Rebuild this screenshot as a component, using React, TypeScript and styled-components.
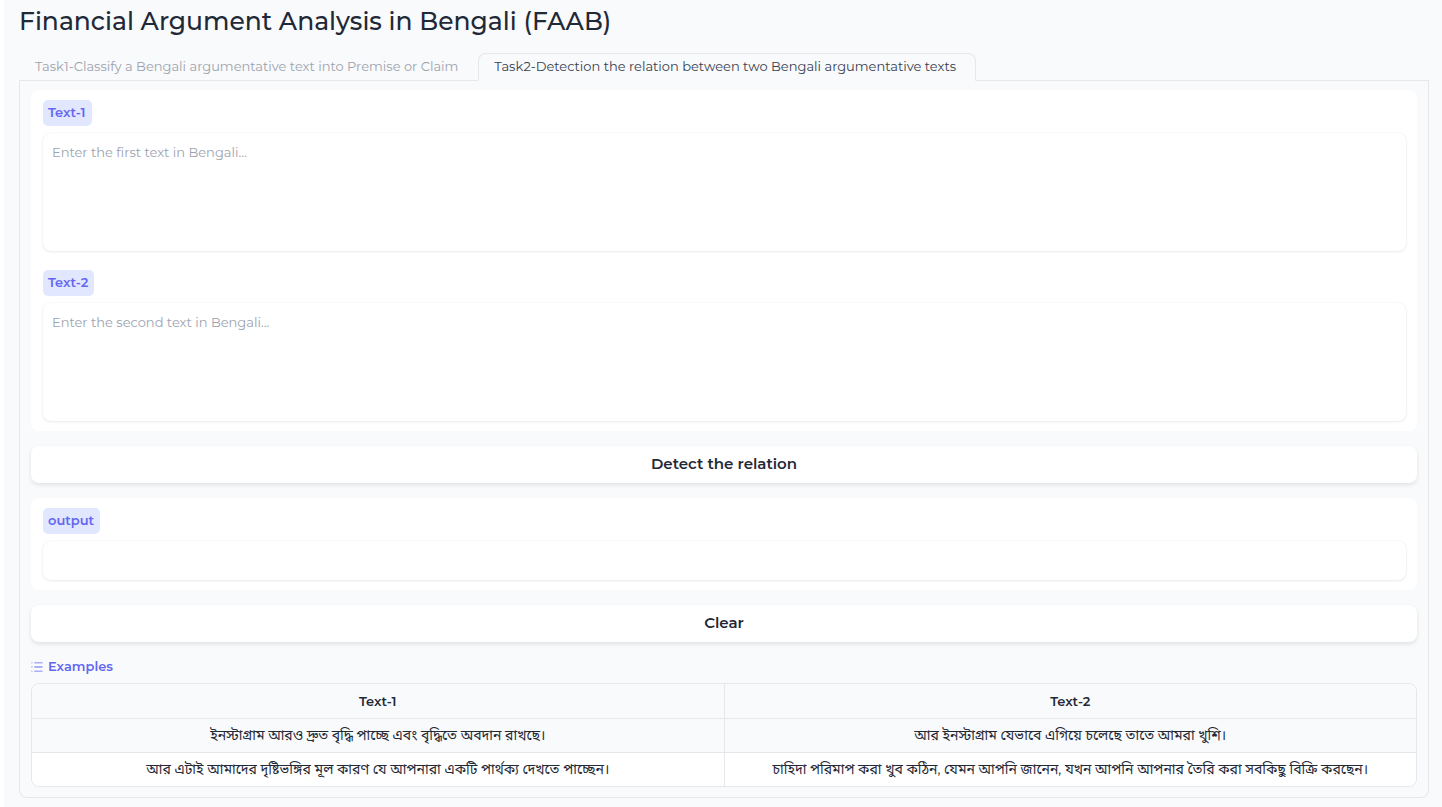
import React, { useState } from "react";
import styled, { createGlobalStyle } from "styled-components";

const GlobalStyle = createGlobalStyle`
  *, *::before, *::after { box-sizing: border-box; }
  body {
    margin: 0;
    background: #ffffff;
    color: #1f2937;
    font-family: Montserrat, Inter, "Noto Sans Bengali", "Noto Sans", sans-serif;
    font-size: 13px;
    line-height: 20px;
  }
  button, textarea, input { font: inherit; color: inherit; }
`;

const Page = styled.main`
  margin-left: 4px;
  padding: 4px 13px 9px 15px;
  background: #f9fafb;
`;

const Title = styled.h1`
  margin: 0 0 15px;
  font-size: 25px;
  line-height: 34px;
  font-weight: 500;
`;

const TabList = styled.div`
  display: flex;
  margin-bottom: -1px;
`;

const Tab = styled.button<{ $active?: boolean }>`
  height: 28px;
  padding: 0 19px 2px 15px;
  border: 1px solid ${(p) => (p.$active ? "#e5e7eb" : "transparent")};
  border-bottom-color: ${(p) => (p.$active ? "#f9fafb" : "#e5e7eb")};
  border-radius: ${(p) => (p.$active ? "8px 8px 0 0" : "0")};
  background: #f9fafb;
  color: ${(p) => (p.$active ? "#374151" : "#9ca3af")};
  white-space: nowrap;
  cursor: pointer;
`;

const Panel = styled.section`
  display: flex;
  flex-direction: column;
  gap: 15px;
  padding: 9px 11px 10px;
  border: 1px solid #e5e7eb;
  border-radius: 0 0 8px 8px;
`;

const Card = styled.div`
  display: flex;
  flex-direction: column;
  gap: 19px;
  padding: 10px 11px 10px 12px;
  border-radius: 8px;
  background: #ffffff;
`;

const Field = styled.div`
  display: flex;
  flex-direction: column;
  align-items: flex-start;
  gap: 7px;
`;

const FieldLabel = styled.label`
  padding: 2px 6px 4px 5px;
  border-radius: 5px;
  background: #e0e7ff;
  color: #6366f1;
  font-weight: 600;
`;

const TextBox = styled.textarea<{ $height: number }>`
  display: block;
  width: 100%;
  height: ${(p) => p.$height}px;
  padding: 9px;
  border: 0;
  border-radius: 8px;
  background: #ffffff;
  box-shadow: 0 0 2px rgba(0, 0, 0, 0.06), 0 1px 3px rgba(0, 0, 0, 0.08);
  resize: none;
  &::placeholder { color: #9ca3af; opacity: 1; }
`;

const ActionButton = styled.button`
  height: 37px;
  padding: 0 20px 2px;
  border: 0;
  border-radius: 8px;
  background: #ffffff;
  box-shadow: 0 2px 4px rgba(0, 0, 0, 0.1);
  font-size: 15px;
  font-weight: 600;
  cursor: pointer;
`;

const Examples = styled.div`
  display: flex;
  flex-direction: column;
  gap: 7px;
`;

const ExamplesHeading = styled.div`
  display: flex;
  align-items: center;
  gap: 5px;
  color: #6366f1;
  font-weight: 600;
  line-height: 19px;
`;

const TableFrame = styled.div`
  overflow: hidden;
  border: 1px solid #e5e7eb;
  border-radius: 8px;
`;

const Table = styled.table`
  width: 100%;
  border-collapse: collapse;
  table-layout: fixed;
  text-align: center;
`;

const Row = styled.tr<{ $white?: boolean }>`
  background: ${(p) => (p.$white ? "#ffffff" : "#f9fafb")};
  & + & { border-top: 1px solid #e5e7eb; }
`;

const HeadCell = styled.th`
  height: 34px;
  padding: 0 10px;
  border-bottom: 1px solid #e5e7eb;
  font-weight: 600;
  & + & { border-left: 1px solid #e5e7eb; }
`;

const Cell = styled.td`
  height: 34px;
  padding: 0 10px;
  font-size: 14px;
  & + & { border-left: 1px solid #e5e7eb; }
`;

const ListIcon = () => (
  <svg width="12" height="12" viewBox="3 3 26 26" fill="currentColor" aria-hidden="true">
    <path d="M10 6h18v2H10zm0 18h18v2H10zm0-9h18v2H10zm-6 0h2v2H4zm0-9h2v2H4zm0 18h2v2H4z" />
  </svg>
);

const examples = [
  [
    "ইনস্টাগ্রাম আরও দ্রুত বৃদ্ধি পাচ্ছে এবং বৃদ্ধিতে অবদান রাখছে।",
    "আর ইনস্টাগ্রাম যেভাবে এগিয়ে চলেছে তাতে আমরা খুশি।",
  ],
  [
    "আর এটাই আমাদের দৃষ্টিভঙ্গির মূল কারণ যে আপনারা একটি পার্থক্য দেখতে পাচ্ছেন।",
    "চাহিদা পরিমাপ করা খুব কঠিন, যেমন আপনি জানেন, যখন আপনি আপনার তৈরি করা সবকিছু বিক্রি করছেন।",
  ],
];

export default function App() {
  const [first, setFirst] = useState("");
  const [second, setSecond] = useState("");
  const clear = () => {
    setFirst("");
    setSecond("");
  };

  return (
    <>
      <GlobalStyle />
      <Page>
        <Title>Financial Argument Analysis in Bengali (FAAB)</Title>
        <TabList role="tablist">
          <Tab role="tab" aria-selected={false}>
            Task1-Classify a Bengali argumentative text into Premise or Claim
          </Tab>
          <Tab role="tab" aria-selected $active>
            Task2-Detection the relation between two Bengali argumentative texts
          </Tab>
        </TabList>
        <Panel role="tabpanel">
          <Card>
            <Field>
              <FieldLabel htmlFor="text-1">Text-1</FieldLabel>
              <TextBox
                id="text-1"
                $height={118}
                placeholder="Enter the first text in Bengali..."
                value={first}
                onChange={(e) => setFirst(e.target.value)}
              />
            </Field>
            <Field>
              <FieldLabel htmlFor="text-2">Text-2</FieldLabel>
              <TextBox
                id="text-2"
                $height={118}
                placeholder="Enter the second text in Bengali..."
                value={second}
                onChange={(e) => setSecond(e.target.value)}
              />
            </Field>
          </Card>
          <ActionButton>Detect the relation</ActionButton>
          <Card>
            <Field>
              <FieldLabel htmlFor="output">output</FieldLabel>
              <TextBox id="output" $height={39} readOnly />
            </Field>
          </Card>
          <ActionButton onClick={clear}>Clear</ActionButton>
          <Examples>
            <ExamplesHeading>
              <ListIcon />
              Examples
            </ExamplesHeading>
            <TableFrame>
              <Table>
                <thead>
                  <Row>
                    <HeadCell>Text-1</HeadCell>
                    <HeadCell>Text-2</HeadCell>
                  </Row>
                </thead>
                <tbody>
                  {examples.map((cells, i) => (
                    <Row key={i} $white={i % 2 === 1}>
                      {cells.map((text) => (
                        <Cell key={text}>{text}</Cell>
                      ))}
                    </Row>
                  ))}
                </tbody>
              </Table>
            </TableFrame>
          </Examples>
        </Panel>
      </Page>
    </>
  );
}
